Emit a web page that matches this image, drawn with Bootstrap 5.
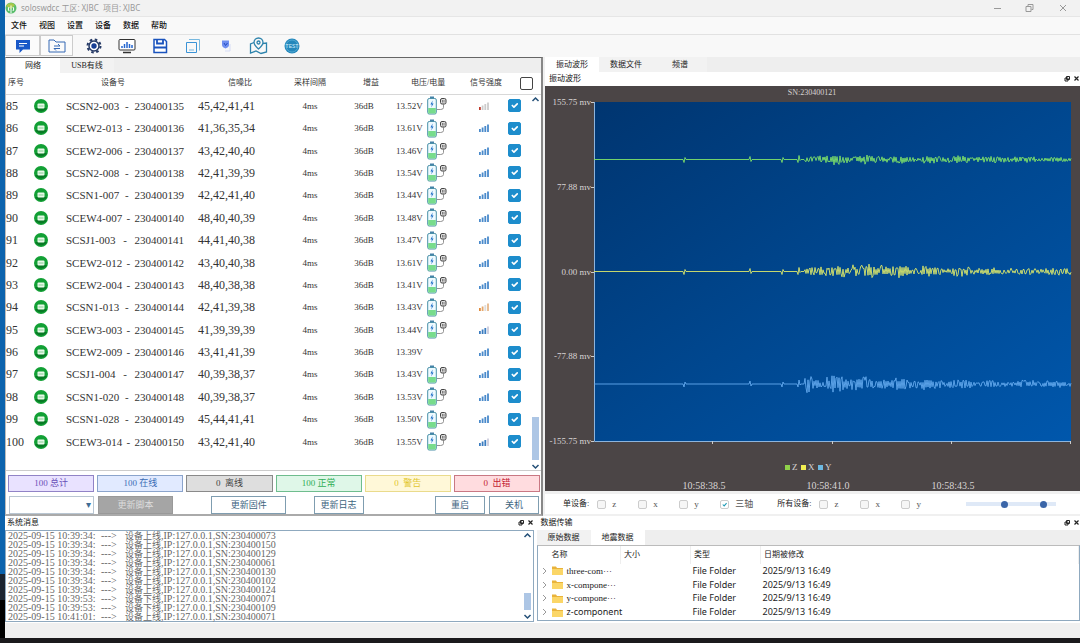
<!DOCTYPE html>
<html lang="zh-CN">
<head>
<meta charset="utf-8">
<meta name="viewport" content="width=device-width, initial-scale=1">
<title>soloswdcc</title>
<link href="https://cdn.jsdelivr.net/npm/bootstrap@5.3.0/dist/css/bootstrap.min.css" rel="stylesheet">
<style>
  :root { --ui: "Liberation Serif", "Noto Sans CJK SC", sans-serif; --win: "Noto Sans", "Noto Sans CJK SC", sans-serif; }
  body { font-family: var(--ui); font-size: 8px; line-height: 12px; color: #222; background: #f0f0f0; }
  button, input, select { font-family: inherit; }
  .desk-edge { width: 5px; background: linear-gradient(#0c63ad 0 90%, #1c2430 90% 94%, #000 94%); }
  .task-strip { height: 5px; background: #1b1a1c; }
  .title-bar { height: 17px; background: #f2f2f2; color: #999; font-family: var(--win); border-bottom: 1px solid #e6e6e6; }
  .menu-bar { height: 18px; background: #f9f9f9; border-bottom: 1px solid #e2e2e2; color: #111; font-weight: 500; padding-left: 6px; }
  .menu-bar a { color: inherit; text-decoration: none; width: 28px; }
  .tool-bar { height: 22px; background: #f8f8f8; }
  .tool { border: 0; background: none; padding: 0; width: 33px; height: 21px; display: flex; align-items: center; justify-content: center; }
  .tool.active { border: 1px solid #ccc; background: #fbfbfb; }
  .tool.first { width: 35px; }
  .work-area { display: grid; grid-template-columns: 538fr 537fr; }
  .dock-area { display: grid; grid-template-columns: 532fr 543fr; height: 107px; }
  .pad-s { padding-left: 2px; } .pad-e { padding-right: 3px; }
  .device-pane { border: 1px solid #666; border-width: 1px 2px 2px 1px; border-left-color: #bbb; border-right-color: #888; border-bottom-color: #aaa; background: #fff; }
  .tabs { height: 15px; background: #eee; }
  .tabs button { border: 0; padding: 0; width: 54px; background: #f2f2f2; color: #222; line-height: 15px; }
  .tabs button.active { background: #fff; }
  .pane-title { height: 14px; background: #fff; color: #111; }
  .device-grid { flex: 1 0 auto; border-bottom: 1px solid #ccc; min-height: 398px; }
  .device-table { width: 100%; height: 380px; table-layout: fixed; margin: 0; color: #333; }
  .device-table th { font-weight: 400; height: 21px; padding: 0; border-bottom: 1px solid #d8d8d8; white-space: nowrap; }
  .device-table td { padding: 0; font-size: 9px; white-space: nowrap; }
  .device-table .big { font-size: 12px; }
  .device-name { display: flex; justify-content: space-between; font-size: 11px; padding: 0 6px 0 12px; }
  .volt-cell { height: 19px; }
  .device-table svg, .tool svg { display: block; }
  .c1 { width: 22px; } .c2 { width: 26px; } .c3 { width: 136px; } .c4 { width: 90px; } .c5 { width: 60px; }
  .c6 { width: 48px; } .c7 { width: 74px; } .c8 { width: 44px; } .c9 { width: 35px; }
  .pad-1 { padding-left: 2px !important; } .pad-2 { padding-left: 8px !important; } .pad-3 { padding-left: 14px !important; }
  .pad-4 { padding-left: 23px !important; } .pad-5 { padding-left: 38px !important; } .pad-6 { padding-left: 47px !important; }
  .row-check.form-check-input { width: 13px; height: 13px; margin: 0; border-radius: 2px; display: block; border-color: #444; }
  .row-check.form-check-input:checked { background-color: #1d8dcc; border-color: #1d8dcc; }
  .scroll-rail { position: absolute; right: 1px; top: 23px; bottom: 0; width: 9px; }
  .scroll-rail svg { flex: none; }
  .thumb { width: 7px; height: 43px; background: #adc6e5; }
  .state-row { gap: 3px; padding: 4px 1px 0 2px; }
  .state-btn { flex: 1 1 0; height: 17px; padding: 0; border: 1px solid; font-size: 9px; line-height: 15px; border-radius: 0; }
  .act-row { padding: 4px 2px 0 3px; }
  .gap-a { flex: 39 1 0; } .gap-b { flex: 28 1 0; } .gap-c { flex: 73 1 0; }
  .act-btn { height: 18px; padding: 0; border: 1px solid #7f9db0; border-radius: 0; background: #fff; color: #3d6480; font-size: 9px; line-height: 16px; width: 50px; }
  .act-btn.wide { width: 75px; }
  .act-btn.off { background: #a5a5a5; border-color: #999; color: #ddd; }
  .pick { display: block; width: 85px; height: 18px; border: 1px solid #b9c6d2; border-radius: 0; appearance: none; background: #fff; }
  .pick-box::after { content: "▾"; position: absolute; right: 3px; top: 3px; font: 10px/12px "DejaVu Sans", sans-serif; color: #3f6d95; pointer-events: none; }
  .axis-bar { height: 20px; background: #fff; margin-top: 3px; padding-left: 18px; }
  .axis-bar label { width: 41px; display: flex; align-items: center; gap: 6px; font-size: 9px; color: #555; }
  .axis-bar input[type=checkbox] { width: 9px; height: 9px; margin: 0; border-radius: 2px; border-color: #ccc; background-color: #f6f6f6; }
  .axis-bar input[type=checkbox]:checked { background-color: #fff;
    background-image: url("data:image/svg+xml,%3csvg xmlns='http://www.w3.org/2000/svg' viewBox='0 0 20 20'%3e%3cpath fill='none' stroke='%231d9bb5' stroke-width='3' d='m5 10 4 4 7-8'/%3e%3c/svg%3e"); }
  .axis-bar input[type=range] { appearance: none; width: 45px; height: 8px; background: linear-gradient(#dfe9f7, #dfe9f7) center / 100% 4px no-repeat; margin: 0; }
  .axis-bar input[type=range]::-webkit-slider-thumb { appearance: none; width: 7px; height: 7px; border-radius: 50%; background: #3a65a8; }
  .chart text { font-family: var(--ui); font-size: 9px; fill: #d8d4d4; }
  .chart .clock { font-size: 10px; } .chart .sn { font-size: 8px; }
  .log-box { height: 92px; border: 1px solid #8fa9bf; background: #fff; }
  .log-lines { display: grid; height: 90px; grid-template-rows: repeat(10, minmax(0, 1fr)); font-size: 10px; line-height: 9px; color: #666; }
  .log-line { display: grid; grid-template-columns: 93px 24px auto; padding-left: 2px; white-space: pre; }
  .log-line .cjk { font-size: 9px; line-height: 1px; }
  .log-rail { width: 10px; padding: 1px 0; }
  .log-rail .thumb { height: 17px; margin-top: auto; }
  .file-box { border: 1px solid #8fa9bf; border-top-color: #bbb; background: #fff; height: 76px; }
  .file-table { width: 100%; height: 73px; table-layout: fixed; margin: 0; color: #222; }
  .file-table th { font-weight: 400; padding: 0 0 0 3px; height: 18px; border-right: 1px solid #eee; }
  .file-table td { padding: 0 0 0 2px; font: 9px/12px var(--win); white-space: nowrap; }
  .file-table svg { flex: none; }
  .file-table .short { font-family: var(--ui); }
  .f1 { width: 83px; } .f2 { width: 70px; } .f3 { width: 70px; } .f4 { width: 318px; }
</style>
</head>
<body class="min-vh-100 d-flex flex-column">
<svg class="d-none">
  <symbol id="online" viewBox="0 0 14 14"><circle cx="7" cy="7" r="7" fill="#12a035"/><path d="M1 9a7 7 0 0 0 12 0z" fill="#087a25"/><rect x="3.500" y="4.500" width="7" height="5" rx="1" fill="#e9f9e9"/><path d="M4.500 7h5" stroke="#6cc27e" stroke-width=".8"/></symbol>
  <symbol id="battery" viewBox="0 0 20 19"><rect x="3" y="0.5" width="4" height="2" fill="#4582a8"/><rect x=".7" y="2.5" width="8.6" height="15.5" rx="1.5" fill="#eefaff" stroke="#4a90a8"/><rect x="1.2" y="12" width="7.6" height="5.5" fill="#77dc8c"/><path d="M5.6 4.5 3.4 8.6h1.5l-.7 3 2.4-4.2H5.2z" fill="#2070c8"/><rect x="13.500" y="2.500" width="5.500" height="5.500" rx="1.500" fill="#ddd" stroke="#444"/><path d="M15.500 4v2.500M17 4v2.500" stroke="#555" stroke-width=".7"/><path d="M16.500 8v3.500q0 2-3 2H10" fill="none" stroke="#777" stroke-width=".8"/></symbol>
  <symbol id="up" viewBox="0 0 9 6"><path d="M1.500 5 4.500 2l3 3" fill="none" stroke="#245078" stroke-width="1.500"/></symbol>
  <symbol id="down" viewBox="0 0 9 6"><path d="m1.500 1 3 3 3-3" fill="none" stroke="#245078" stroke-width="1.500"/></symbol>
  <symbol id="dock-buttons" viewBox="0 0 16 8"><path d="M2.500 1.500h3v3h-3zM1 3h3v3H1z" fill="#fff" stroke="#222"/><path d="m10.500 1.500 4 4m0-4-4 4" stroke="#222" stroke-width="1.200"/></symbol>
  <symbol id="folder" viewBox="0 0 11 9"><path d="M0 .5h4l1 1.500h6V9H0z" fill="#e9b33b"/><path d="M0 3h11v6H0z" fill="#fbd667"/></symbol>
</svg>

<div class="d-flex flex-grow-1">
  <div class="desk-edge flex-shrink-0"></div>
  <div class="flex-grow-1 d-flex flex-column">
    <header class="title-bar d-flex align-items-center">
      <svg width="12" height="12" viewBox="0 0 12 12" class="me-1"><circle cx="6" cy="6" r="5.500" fill="#59bd6b"/><path d="M1 4a5.500 5.500 0 0 1 9-1L6 7z" fill="#a8c84a"/><path d="M6 3.500V11M4 5q-1.500 2 0 4M8 5q1.500 2 0 4" stroke="#fff" fill="none"/></svg>
      <span>soloswdcc 工区: XJBC&nbsp; 项目: XJBC</span>
      <svg class="ms-auto me-2" width="82" height="12" viewBox="0 0 82 12" fill="none" stroke="#999"><path d="M4 6.500h7M36 4.500h5v5h-5zM38 4V2.500h5v5h-1.500M70 3l6 6m0-6-6 6"/></svg>
    </header>
    <nav class="menu-bar d-flex align-items-center">
      <a href="#">文件</a><a href="#">视图</a><a href="#">设置</a><a href="#">设备</a><a href="#">数据</a><a href="#">帮助</a>
    </nav>
    <div class="tool-bar d-flex">
      <button class="tool active first" aria-label="消息"><svg width="16" height="16" viewBox="0 0 16 16"><path d="M1 2h14v9.500H8L4.500 15v-3.500H1z" fill="#1858c8"/><path d="M4 5.500h8M4 8h5" stroke="#fff"/></svg></button>
      <button class="tool active" aria-label="传输"><svg width="18" height="16" viewBox="0 0 18 16" fill="none" stroke="#3568b4"><path d="M1 2h5l2 2h9v10H1z"/><path d="M6 8h6l-2-2M12 10.500H6l2 2"/></svg></button>
      <button class="tool ms-1" aria-label="设置"><svg width="16" height="16" viewBox="0 0 16 16"><circle cx="8" cy="8" r="6.500" fill="none" stroke="#263a66" stroke-width="2" stroke-dasharray="2.550 2.550"/><circle cx="8" cy="8" r="5" fill="#fff" stroke="#263a66" stroke-width="1.500"/><circle cx="8" cy="8" r="2.700" fill="#173e94"/></svg></button>
      <button class="tool" aria-label="监视"><svg width="18" height="16" viewBox="0 0 18 16"><rect x="1" y="1.500" width="16" height="10.500" rx="1" fill="#fff" stroke="#333"/><path d="M4 10V8m2.500 2V6M9 10V4m2.500 6V6M14 10V7" stroke="#2466cf" stroke-width="1.500"/><path d="M5 14.500h8" stroke="#333" stroke-width="1.500"/></svg></button>
      <button class="tool" aria-label="保存"><svg width="16" height="16" viewBox="0 0 16 16"><path d="M2 1.500h10.500L14.500 3.500v11H2z" fill="#fff" stroke="#1a53bd" stroke-width="1.500"/><path d="M5 2v3.500h6V2M2 9.500h12" fill="none" stroke="#1a53bd" stroke-width="1.800"/></svg></button>
      <button class="tool" aria-label="窗口"><svg width="16" height="16" viewBox="0 0 16 16" fill="none" stroke="#3b93d6"><path d="M1.500 4.500h10v10h-10z"/><path d="M4 1.500h10.500v11M4 12h5" stroke="#77b8df"/></svg></button>
      <button class="tool" aria-label="电源"><svg width="12" height="14" viewBox="0 0 12 14"><path d="M2 1.500h7v4.500q0 2-3.500 3.500Q2 8 2 6z" fill="#6f8ff0"/><path d="M10 5v7H5" stroke="#d5dcf6" fill="none"/><path d="m4 4 1.500 2.500L7.500 4" stroke="#214ac0" fill="none"/></svg></button>
      <button class="tool" aria-label="地图"><svg width="19" height="18" viewBox="0 0 19 18" fill="none" stroke="#2d83ac" stroke-width="1.300"><path d="M5 5.500 1.500 7v9L7 14l5 2.500L17.500 15V6L14 6.500"/><path d="M9.500 12Q5 8 5 5.500a4.500 4.500 0 0 1 9 0Q14 8 9.500 12z"/><circle cx="9.500" cy="5.500" r="1.500"/></svg></button>
      <button class="tool" aria-label="测试"><svg width="16" height="16" viewBox="0 0 16 16"><circle cx="8" cy="8" r="7.500" fill="#2487bb"/><circle cx="8" cy="8" r="6" fill="none" stroke="#63b4da" stroke-width=".7"/><text x="8" y="9.800" font-size="5" font-family="Liberation Sans" fill="#d7effb" text-anchor="middle">TEST</text></svg></button>
    </div>

    <main class="work-area">
      <section class="device-pane d-flex flex-column">
        <div class="tabs d-flex"><button class="active">网络</button><button>USB有线</button></div>
        <div class="device-grid position-relative">
          <table class="device-table">
            <colgroup><col class="c1"><col class="c2"><col class="c3"><col class="c4"><col class="c5"><col class="c6"><col class="c7"><col class="c8"><col class="c9"></colgroup>
            <thead><tr><th colspan="2" class="pad-1">序号</th><th class="pad-6">设备号</th><th class="pad-5">信噪比</th><th class="text-center">采样间隔</th><th class="pad-4">增益</th><th class="pad-4">电压/电量</th><th class="pad-2">信号强度</th><th class="pad-3"><input type="checkbox" class="form-check-input row-check" aria-label="全选"></th></tr></thead>
            <tbody id="devices"></tbody>
          </table>
          <div class="scroll-rail d-flex flex-column align-items-center">
            <svg width="9" height="6"><use href="#up"/></svg>
            <div class="thumb mt-auto mb-1"></div>
            <svg width="9" height="6"><use href="#down"/></svg>
          </div>
        </div>
        <div class="d-flex state-row" id="states"></div>
        <div class="d-flex act-row">
          <div class="position-relative pick-box me-1"><select class="pick" aria-label="脚本"><option></option></select></div>
          <button class="act-btn wide off">更新脚本</button><span class="gap-a"></span>
          <button class="act-btn wide">更新固件</button><span class="gap-b"></span>
          <button class="act-btn">更新日志</button><span class="gap-c"></span>
          <button class="act-btn">重启</button>
          <button class="act-btn ms-1">关机</button>
        </div>
      </section>

      <section class="pad-s d-flex flex-column">
        <div class="tabs d-flex"><button class="active">振动波形</button><button>数据文件</button><button>频谱</button></div>
        <div class="pane-title d-flex align-items-center ps-1"><span>振动波形</span><svg class="ms-auto" width="16" height="8"><use href="#dock-buttons"/></svg></div>
        <svg class="chart d-block w-100" viewBox="0 0 535 405" id="chart">
          <defs><linearGradient id="sea" x1="0" y1="0" x2="1" y2="1"><stop offset="0" stop-color="#003570"/><stop offset=".5" stop-color="#00478f"/><stop offset="1" stop-color="#0057ac"/></linearGradient></defs>
          <rect width="535" height="405" fill="#4b4546"/>
          <rect x="49" y="16" width="477" height="339" fill="url(#sea)"/>
          <path d="M49.500 16v339.500H526" fill="none" stroke="#8db4dc"/>
          <path d="M46 16.500h3M46 101.500h3M46 186.500h3M46 270.500h3M46 355.500h3M167.500 355v3M287.500 355v3M406.500 355v3M525.500 355v3" stroke="#ccc"/>
          <text class="sn" x="267" y="9" text-anchor="middle">SN:230400121</text>
          <g text-anchor="end"><text x="46" y="19">155.75 mv</text><text x="46" y="104">77.88 mv</text><text x="46" y="189">0.00 mv</text><text x="46" y="273">-77.88 mv</text><text x="46" y="358">-155.75 mv</text></g>
          <rect x="240" y="379" width="5" height="5" fill="#8fd14a"/><text x="247" y="384">Z</text>
          <rect x="256" y="379" width="5" height="5" fill="#f1ee52"/><text x="263" y="384">X</text>
          <rect x="273" y="379" width="5" height="5" fill="#6db9e2"/><text x="280" y="384">Y</text>
          <g text-anchor="middle"><text class="clock" x="159" y="403">10:58:38.5</text><text class="clock" x="283" y="403">10:58:41.0</text><text class="clock" x="408" y="403">10:58:43.5</text></g>
        </svg>
        <div class="axis-bar d-flex align-items-center">
          <span class="me-2">单设备:</span>
          <label><input type="checkbox" class="form-check-input">z</label><label><input type="checkbox" class="form-check-input">x</label><label><input type="checkbox" class="form-check-input">y</label>
          <label class="me-3"><input type="checkbox" class="form-check-input" checked><span class="text-nowrap">三轴</span></label>
          <span class="me-2">所有设备:</span>
          <label><input type="checkbox" class="form-check-input">z</label><label><input type="checkbox" class="form-check-input">x</label><label><input type="checkbox" class="form-check-input">y</label>
          <div class="d-flex ms-auto me-4"><input type="range" value="92" aria-label="增益"><input type="range" value="76" aria-label="时窗"></div>
        </div>
      </section>
    </main>

    <div class="dock-area">
      <section class="pad-e bg-white">
        <div class="pane-title d-flex align-items-center pad-s"><span>系统消息</span><svg class="ms-auto" width="16" height="8"><use href="#dock-buttons"/></svg></div>
        <div class="log-box d-flex">
          <div class="log-lines flex-grow-1" id="log"></div>
          <div class="log-rail d-flex flex-column align-items-center"><svg width="9" height="6"><use href="#up"/></svg><div class="thumb mb-1"></div><svg width="9" height="6"><use href="#down"/></svg></div>
        </div>
      </section>
      <section class="bg-white">
        <div class="pane-title d-flex align-items-center ps-1"><span>数据传输</span><svg class="ms-auto" width="16" height="8"><use href="#dock-buttons"/></svg></div>
        <div class="tabs d-flex"><button>原始数据</button><button class="active">地震数据</button></div>
        <div class="file-box">
          <table class="file-table"><colgroup><col class="f1"><col class="f2"><col class="f3"><col class="f4"></colgroup>
            <thead><tr><th class="pad-3">名称</th><th>大小</th><th>类型</th><th>日期被修改</th></tr></thead>
            <tbody id="files"></tbody></table>
        </div>
      </section>
    </div>
    <footer class="flex-grow-1"></footer>
  </div>
</div>
<div class="task-strip"></div>

<script>
  const devices = `SCSN2-003|45,42,41,41|13.52
SCEW2-013|41,36,35,34|13.61
SCEW2-006|43,42,40,40|13.46
SCSN2-008|42,41,39,39|13.54
SCSN1-007|42,42,41,40|13.44
SCEW4-007|48,40,40,39|13.48
SCSJ1-003|44,41,40,38|13.47
SCEW2-012|43,40,40,38|13.61
SCEW2-004|48,40,38,38|13.41
SCSN1-013|42,41,39,38|13.43
SCEW3-003|41,39,39,39|13.44
SCEW2-009|43,41,41,39|13.39
SCSJ1-004|40,39,38,37|13.43
SCSN1-020|40,39,38,37|13.53
SCSN1-028|45,44,41,41|13.50
SCEW3-014|43,42,41,40|13.55`.split("\n").map(l => l.split("|"));
  const levels = { 0: ["#c0392b", "#ccc", "#ccc", "#ccc"], 9: ["#e08a3c", "#e6a86c", "#ddd", "#e6b78a"], 10: ["#3a7cc0", "#3a7cc0", "#3a7cc0", "#ccd"], 15: ["#3a7cc0", "#3a7cc0", "#3a7cc0", "#ccd"] };
  const bars = i => (levels[i] || Array(4).fill("#4a8acb")).map((c, k) =>
    `<rect x="${k * 2.7}" y="${5 - k * 1.5}" width="1.8" height="${3 + k * 1.5}" fill="${c}"/>`).join("");
  document.getElementById("devices").innerHTML = devices.map(([name, snr, volt], i) => `<tr>
    <td class="big">${85 + i}</td>
    <td><svg class="mx-auto" width="14" height="14"><use href="#online"/></svg></td>
    <td><div class="device-name"><span>${name}</span><span>-</span><span>${230400135 + i}</span></div></td><td class="big pad-2">${snr}</td>
    <td class="text-center">4ms</td><td class="text-center">36dB</td>
    <td><div class="volt-cell d-flex align-items-center pad-2"><span class="me-1">${volt}V</span>${i === 11 ? "" : '<svg width="20" height="19"><use href="#battery"/></svg>'}</div></td>
    <td><svg class="mx-auto" width="11" height="8">${bars(i)}</svg></td>
    <td class="pad-1"><input type="checkbox" class="form-check-input row-check" checked aria-label="${name}"></td></tr>`).join("");

  document.getElementById("states").innerHTML = [
    ["100 总计", "#6b4fb8", "#e9e2ff", "#9183c6"], ["100 在线", "#3b6db5", "#e1eaff", "#8ba4cc"], ["0&nbsp; 离线", "#444", "#dedede", "#8a8a8a"],
    ["100 正常", "#2fae57", "#dff7e8", "#6fbd8e"], ["0&nbsp; 警告", "#e2c62e", "#fff8d8", "#eadb8c"], ["0&nbsp; 出错", "#c42032", "#ffdcdf", "#c97883"]
  ].map(([t, c, b, e]) => `<button class="state-btn" style="color:${c};background:${b};border-color:${e}">${t}</button>`).join("");

  const log = [["39:34", "上", "073"], ["39:34", "上", "150"], ["39:34", "上", "129"], ["39:34", "上", "061"], ["39:34", "上", "130"],
    ["39:34", "上", "102"], ["39:34", "上", "124"], ["39:53", "下", "071"], ["39:53", "下", "109"], ["41:01", "上", "071"]];
  document.getElementById("log").innerHTML = log.map(([t, d, s]) =>
    `<div class="log-line"><span>2025-09-15 10:${t}:</span><span>---&gt;</span><span><span class="cjk">设备${d}线</span>,IP:127.0.0.1,SN:230400${s}</span></div>`).join("");

  document.getElementById("files").innerHTML = ["three-com···", "x-compone···", "y-compone···", "z-component"].map((n, i) =>
    `<tr><td><div class="d-flex align-items-center gap-1"><svg width="8" height="8" fill="none" stroke="#999"><path d="m3 1 3 3-3 3"/></svg><svg width="11" height="9"><use href="#folder"/></svg><span class="${i < 3 ? "short" : ""}">${n}</span></div></td><td></td><td>File Folder</td><td>2025/9/13 16:49</td></tr>`).join("");

  // Three seismic traces: a quiet lead-in with small ticks, then a decaying burst.
  let seed = 11;
  const rnd = () => (seed = (seed * 16807) % 2147483647) / 2147483647;
  const traces = [
    ["#7fe36a", 73.5, x => x < 320 ? 6 * Math.min(1, (x - 250) / 20) : 5 - (x - 320) / 150],
    ["#dbe86a", 185.5, x => x < 300 ? 4 + (x - 258) / 9 : x < 360 ? 9 : Math.max(4.5, 7 - (x - 360) / 40)],
    ["#63a9ee", 298, x => x < 320 ? 10 : Math.max(4.5, 9 - (x - 320) / 30)]
  ];
  const ticks = { 139: 3, 140: -2, 205: -3, 206: 2, 237: 3, 238: -2, 253: 3, 254: -4, 255: 1 };
  let out = "";
  for (const [color, mid, env] of traces) {
    let d = "M49 " + mid, side = 1;
    for (let x = 50; x <= 526; x++) {
      let y = ticks[x] || 0;
      if (x >= 260) {
        if (rnd() > .28) side = -side;
        y = side * env(x) * (.2 + .7 * rnd() * (.3 + .7 * rnd()) + .12 * Math.sin(x / 5));
      }
      d += `L${x} ${(mid + y).toFixed(1)}`;
    }
    out += `<path d="${d}" fill="none" stroke="${color}" stroke-width=".9"/>`;
  }
  document.getElementById("chart").insertAdjacentHTML("beforeend", out);
</script>
<script src="https://cdn.jsdelivr.net/npm/bootstrap@5.3.0/dist/js/bootstrap.bundle.min.js"></script>
</body>
</html>
